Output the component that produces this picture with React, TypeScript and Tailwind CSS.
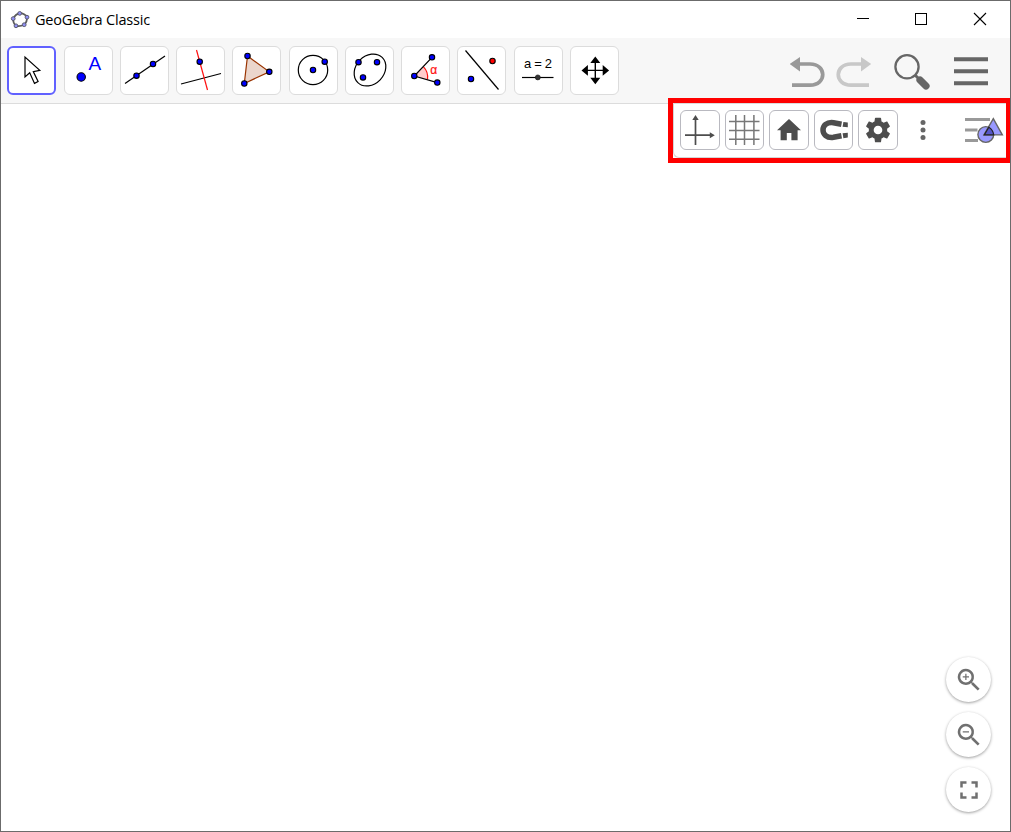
import type { ReactNode } from "react";

function Dot({ x, y, r = 2.7, fill = "#0000ff" }: { x: number; y: number; r?: number; fill?: string }) {
  return <circle cx={x} cy={y} r={r} fill={fill} stroke="#000" strokeWidth="1.1" />;
}

function Tool({ label, active, children }: { label: string; active?: boolean; children: ReactNode }) {
  return (
    <button
      aria-label={label}
      className={
        active
          ? "flex h-[49px] w-[49px] shrink-0 items-center justify-center rounded-md border-2 border-[#6161ff] bg-white"
          : "flex h-[49px] w-[49px] shrink-0 items-center justify-center rounded-md border border-[#dcdcdc] bg-white"
      }
    >
      <svg viewBox="0 0 49 49" className="h-[49px] w-[49px] shrink-0" fill="none" stroke="#000" strokeWidth="1.2">
        {children}
      </svg>
    </button>
  );
}

function ViewButton({ label, children }: { label: string; children: ReactNode }) {
  return (
    <button
      aria-label={label}
      className="flex h-10 w-[39.6px] shrink-0 items-center justify-center rounded-[6px] border border-[#b9b9c0] bg-white"
    >
      <svg viewBox="0 0 40 40" className="h-10 w-10 shrink-0" fill="none" stroke="#4d4d4d">
        {children}
      </svg>
    </button>
  );
}

function ZoomButton({ label, children }: { label: string; children: ReactNode }) {
  return (
    <button
      aria-label={label}
      className="flex h-[45px] w-[45px] items-center justify-center rounded-full bg-white shadow-[0_1px_3px_rgba(0,0,0,0.38)]"
    >
      <svg viewBox="0 0 24 24" className="h-[30px] w-[30px]" fill="#707070">
        {children}
      </svg>
    </button>
  );
}

function TitleBar() {
  return (
    <header className="flex h-[37px] shrink-0 items-center bg-white pl-[9px]">
      <svg viewBox="0 0 20 20" className="h-5 w-5" fill="none">
        <path
          d="M9.700 3.200C13 3.300 15.500 4.700 17 7.100C17.200 10.500 16.200 12.800 14.200 14.700C11.500 16 9 16.400 6 15.800C4 14 3 12 3.200 8.600C4.700 5.800 6.700 4 9.700 3.200z"
          stroke="#5c5c5c"
          strokeWidth="1.800"
        />
        <g fill="#9090f4" stroke="#555566" strokeWidth="0.9">
          <circle cx="9.700" cy="3.400" r="1.900" />
          <circle cx="17" cy="7.200" r="1.900" />
          <circle cx="14.200" cy="14.700" r="1.900" />
          <circle cx="6" cy="15.800" r="1.900" />
          <circle cx="3.200" cy="8.600" r="1.900" />
        </g>
      </svg>
      <span className="ml-[5px] font-['Open_Sans','Noto_Sans',sans-serif] text-[14.5px] leading-5 tracking-[-0.19px] whitespace-nowrap text-black">
        GeoGebra Classic
      </span>
      <svg viewBox="0 0 160 36" className="ml-auto h-9 w-[160px] self-start" fill="none" stroke="#000">
        <path d="M7 17.500h12" shapeRendering="crispEdges" />
        <rect x="65.500" y="12.500" width="11" height="11" shapeRendering="crispEdges" />
        <path d="M124 12l12 12M136 12l-12 12" strokeWidth="1.100" />
      </svg>
    </header>
  );
}

function Toolbar() {
  return (
    <div className="flex h-[66px] shrink-0 items-start border-b border-[#dcdcdc] bg-[#f7f7f7] pt-2 pl-[6.4px]">
      <div className="flex gap-[7.25px]">
        <Tool label="Move" active>
          <path d="M18 11v20l4.700-4.200 4.800 10.600 3.600-1.800-4.800-10 6.500-1.200z" strokeLinejoin="miter" />
        </Tool>
        <Tool label="Point">
          <Dot x={17.2} y={31} r={4.2} />
          <text x="24.400" y="24" fontSize="19" fill="#0000ff" stroke="none" className="font-['Liberation_Sans',sans-serif]">
            A
          </text>
        </Tool>
        <Tool label="Line">
          <path d="M5 37.500L45 10" />
          <Dot x={16.5} y={29.7} />
          <Dot x={33} y={18} />
        </Tool>
        <Tool label="Perpendicular line">
          <path d="M5 38l40-10.500" />
          <path d="M20.500 4l11 40" stroke="#ff1010" />
          <Dot x={23.7} y={15.7} />
        </Tool>
        <Tool label="Polygon">
          <path d="M15.500 10l21.800 15.800-25 11.700z" fill="#ebd6cc" stroke="#993300" />
          <Dot x={15.5} y={10} />
          <Dot x={37.3} y={25.8} />
          <Dot x={12.3} y={37.5} />
        </Tool>
        <Tool label="Circle">
          <circle cx="24" cy="24" r="14.700" />
          <Dot x={24} y={24} />
          <Dot x={35.7} y={15.7} />
        </Tool>
        <Tool label="Ellipse">
          <ellipse cx="25" cy="24" rx="17.500" ry="14.100" transform="rotate(-46 25 24)" />
          <Dot x={13.5} y={16.2} />
          <Dot x={32} y={16.2} />
          <Dot x={18} y={31.4} />
        </Tool>
        <Tool label="Angle">
          <path d="M13.300 30l9.200-9.200q5 5 4 12.600z" fill="#ffcccc" stroke="none" />
          <path d="M22.500 20.800q5 5 4 12.600" stroke="#ff1010" />
          <path d="M31 11.300L13.300 30l23 6.600" />
          <Dot x={13.3} y={30} />
          <Dot x={31} y={11.3} />
          <Dot x={36.3} y={36.6} />
          <text x="29.300" y="27.800" fontSize="12" fill="#ff1010" stroke="#ff1010" strokeWidth="0.2" className="font-['Liberation_Sans',sans-serif]">
            α
          </text>
        </Tool>
        <Tool label="Reflect">
          <path d="M8.500 4.500l33 39" />
          <Dot x={35.5} y={15} fill="#ff0000" />
          <Dot x={14} y={33} />
        </Tool>
        <Tool label="Slider">
          <text x="10" y="22.300" fontSize="13" textLength="28" fill="#000" stroke="none" className="font-['Liberation_Sans',sans-serif]">
            a = 2
          </text>
          <path d="M8 31.500h31.500" />
          <circle cx="23.800" cy="31.400" r="2.500" fill="#333" stroke="#111" strokeWidth="0.6" />
        </Tool>
        <Tool label="Move graphics view">
          <path d="M25.300 15v19M16 24.400h19" strokeWidth="1.400" />
          <path
            d="M25.300 10.600l5 6.400h-10zM25.300 38.200l5-6.400h-10zM11.500 24.400l6.400-5.300v10.600zM39.100 24.400l-6.400-5.300v10.600z"
            fill="#000"
            stroke="none"
          />
        </Tool>
      </div>
      <svg viewBox="0 0 220 56" className="ml-auto h-14 w-[220px] shrink-0" fill="none">
        <g stroke="#999" strokeWidth="3.700">
          <path d="M8 18H20C37 18 37 39.200 20 39.200H2" />
          <path d="M10 11v14.500L-.2 18z" fill="#999" stroke="none" />
        </g>
        <g stroke="#c8c8c8" strokeWidth="3.700">
          <path d="M73 18H61C44 18 44 39.200 61 39.200H79" />
          <path d="M71 11v14.500L81.200 18z" fill="#c8c8c8" stroke="none" />
        </g>
        <circle cx="117" cy="20.800" r="11.600" stroke="#666" strokeWidth="2.300" />
        <path d="M125 29l4 4" stroke="#666" strokeWidth="3" />
        <path d="M130 34l6 6" stroke="#666" strokeWidth="7.200" strokeLinecap="round" />
        <path d="M164 13.200h34M164 25.200h34M164 37.300h34" stroke="#666" strokeWidth="4" />
      </svg>
    </div>
  );
}

function ViewBar() {
  return (
    <div className="flex h-[54px] w-[337px] shrink-0 items-start self-end rounded-bl-md border-b border-l border-[#d5d5d5] bg-white pt-[6px] pl-[6px]">
      <div className="flex gap-[5px]">
        <ViewButton label="Axes">
          <path d="M15.500 35V8M5 25.200h26" strokeWidth="1.700" />
          <path d="M15.500 5l3.200 5h-6.400zM34.800 25.200l-5-3v6z" fill="#4d4d4d" stroke="none" />
        </ViewButton>
        <ViewButton label="Grid">
          <path d="M11.800 5v30M20.500 5v30M29.900 5v30M5 11.500h30.500M5 20.500h30.500M5 29.300h30.500" strokeWidth="1.500" stroke="#777" />
        </ViewButton>
        <ViewButton label="Home">
          <path d="M20 9L8 20.300h3.600V30.300h6.200V23h4.600v7.300h6.200v-10H32z" fill="#4d4d4d" stroke="none" />
        </ViewButton>
        <ViewButton label="Snap to grid">
          <path d="M27.500 14.200L19.500 12.700C5.500 10.800 5.500 29.200 19.500 27.300L27.500 25.800" strokeWidth="5.500" />
          <path d="M29.400 11.900l4.400.6v4.800l-5.200-.5zM28.600 23.300l5.200-.6v4.800l-4.400.8z" fill="#4d4d4d" stroke="none" />
        </ViewButton>
        <ViewButton label="Settings">
          <g transform="translate(4.700 4.700) scale(1.275)">
            <path
              fill="#4d4d4d"
              stroke="none"
              d="M19.140 12.940c.04-.3.06-.61.06-.94s-.02-.64-.07-.94l2.030-1.580c.18-.14.23-.41.12-.61l-1.920-3.320c-.12-.22-.37-.29-.59-.22l-2.390.96c-.5-.38-1.030-.7-1.620-.94l-.36-2.540c-.04-.24-.24-.41-.48-.41h-3.840c-.24 0-.43.17-.47.41l-.36 2.540c-.59.24-1.130.57-1.620.94l-2.390-.96c-.22-.08-.47 0-.59.22L2.740 8.870c-.12.21-.08.47.12.61l2.030 1.580c-.05.3-.09.63-.09.94s.02.64.07.94l-2.030 1.580c-.18.14-.23.41-.12.61l1.920 3.320c.12.22.37.29.59.22l2.390-.96c.5.38 1.030.7 1.620.94l.36 2.540c.05.24.24.41.48.41h3.840c.24 0 .44-.17.47-.41l.36-2.540c.59-.24 1.130-.56 1.620-.94l2.390.96c.22.08.47 0 .59-.22l1.920-3.320c.12-.22.07-.47-.12-.61zM12 15.400A3.400 3.400 0 1 1 12 8.600a3.400 3.400 0 0 1 0 6.800z"
            />
          </g>
        </ViewButton>
      </div>
      <svg viewBox="0 0 10 40" className="ml-[20px] h-10 w-[10px] shrink-0" fill="#666">
        <circle cx="5" cy="12.500" r="2.500" />
        <circle cx="5" cy="20" r="2.500" />
        <circle cx="5" cy="27.400" r="2.500" />
      </svg>
      <svg viewBox="0 0 40 40" className="ml-[36px] h-10 w-10 shrink-0" fill="none">
        <path d="M1 9.500h25M1 20h12.500M1 30.500h13" stroke="#999" strokeWidth="3" />
        <circle cx="21.800" cy="24.500" r="7.900" fill="#9999ff" stroke="#666" strokeWidth="1.400" />
        <path d="M29.300 8.700l9 16.200H20z" fill="#9999ff" stroke="#666" strokeWidth="1.400" />
        <path d="M20.300 24.900l4.500-7.600q4.300 2.600 4.900 7.600z" fill="#5656c8" stroke="#222" strokeWidth="1.200" />
      </svg>
    </div>
  );
}

export default function App() {
  return (
    <div className="relative flex h-[832px] w-[1011px] flex-col overflow-hidden border border-[#6b6b6b] bg-white">
      <TitleBar />
      <Toolbar />
      <ViewBar />
      <main className="flex flex-1 flex-col items-end justify-end gap-[10px] pr-[19px] pb-[19px]">
        <ZoomButton label="Zoom in">
          <path d="M15.500 14h-.79l-.28-.27A6.500 6.500 0 1 0 13.730 14.430l.27.28v.79l5 4.990L20.490 19zM9.500 14a4.500 4.500 0 1 1 0-9 4.500 4.500 0 0 1 0 9zM12 9h-2V7H9v2H7v1h2v2h1v-2h2z" />
        </ZoomButton>
        <ZoomButton label="Zoom out">
          <path d="M15.500 14h-.79l-.28-.27A6.500 6.500 0 1 0 13.730 14.430l.27.28v.79l5 4.990L20.490 19zM9.500 14a4.500 4.500 0 1 1 0-9 4.500 4.500 0 0 1 0 9zM7 9h5v1H7z" />
        </ZoomButton>
        <ZoomButton label="Fullscreen">
          <path d="M7 14H5v5h5v-2H7zM5 10h2V7h3V5H5zM17 17h-3v2h5v-5h-2zM14 5v2h3v3h2V5z" />
        </ZoomButton>
      </main>
      <div className="pointer-events-none absolute top-[97px] left-[667px] h-[65px] w-[343px] border-[5px] border-[#ff0000]" />
    </div>
  );
}
